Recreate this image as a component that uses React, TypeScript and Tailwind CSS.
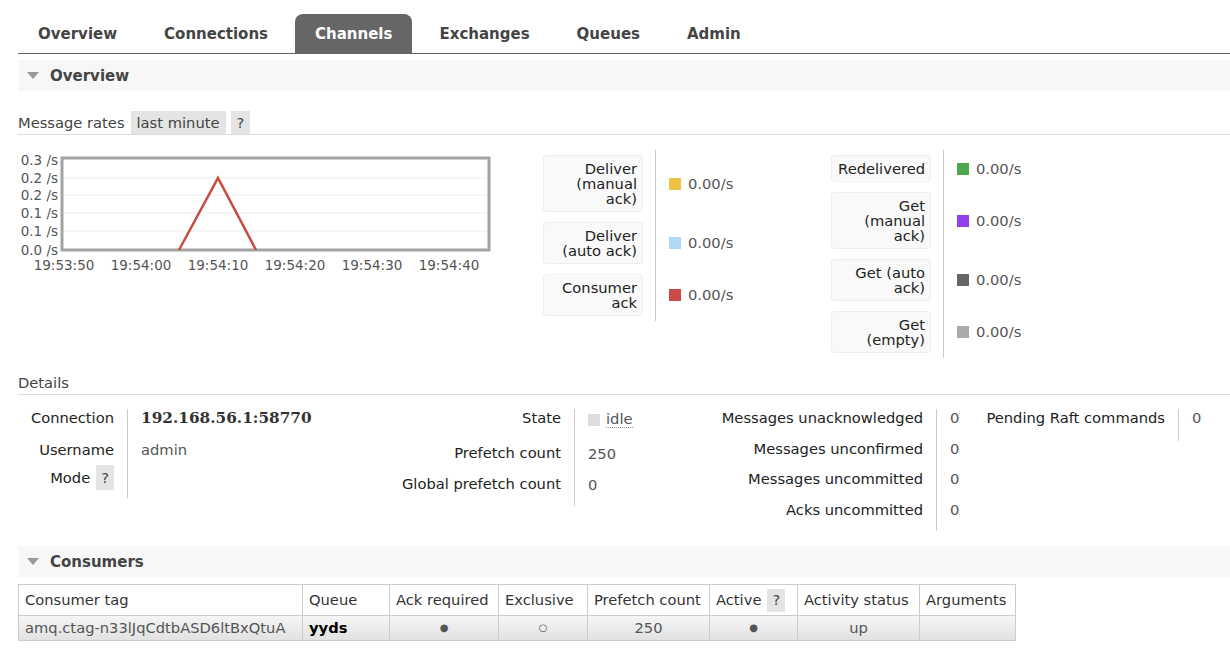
import React from "react"

const tabs = ["Overview", "Connections", "Channels", "Exchanges", "Queues", "Admin"]

function Tag({ children }: { children: React.ReactNode }) {
  return <span className="inline-flex h-[23px] items-center bg-[#e4e4e4] px-[6px] text-[#444]">{children}</span>
}

function SectionHeader({ title }: { title: string }) {
  return (
    <div className="flex h-[31px] items-center bg-[#f7f7f7] pl-[9px]">
      <svg width="12" height="7" viewBox="0 0 12 7">
        <polygon points="0,0 12,0 6,7" fill="#999" />
      </svg>
      <span className="ml-[11px] text-[15px] font-bold text-[#444]">{title}</span>
    </div>
  )
}

function Chart() {
  const ys = [
    ["0.3 /s", 10],
    ["0.2 /s", 28],
    ["0.2 /s", 45],
    ["0.1 /s", 63],
    ["0.1 /s", 81],
    ["0.0 /s", 100],
  ] as const
  const xs = ["19:53:50", "19:54:00", "19:54:10", "19:54:20", "19:54:30", "19:54:40"]
  return (
    <svg width="482" height="125" className="shrink-0" style={{ fontFamily: "'DejaVu Sans', Verdana, sans-serif" }}>
      {ys.slice(1, 5).map(([, y], i) => (
        <line key={i} x1="44" x2="470" y1={y} y2={y} stroke="#ececec" strokeWidth="1" />
      ))}
      {ys.map(([t, y], i) => (
        <text key={i} x="40" y={y + 5} textAnchor="end" fontSize="13.5" fill="#555">
          {t}
        </text>
      ))}
      {xs.map((t, i) => (
        <text key={t} x={46 + i * 77} y={120} textAnchor="middle" fontSize="13.5" fill="#555">
          {t}
        </text>
      ))}
      <rect x="44" y="8" width="427" height="92" fill="none" stroke="#a3a3a3" strokeWidth="3" />
      <polyline points="161,100 200,28 238,100" fill="none" stroke="#cb4b3c" strokeWidth="2.5" />
    </svg>
  )
}

type Rate = { label: string[]; color: string; h: string }

function RateColumn({ rows, valueW }: { rows: Rate[]; valueW: string }) {
  return (
    <div className="flex flex-col">
      {rows.map((r, i) => (
        <div key={i} className="flex">
          <div className="py-[5px] pr-[12px]">
            <div
              className={`${r.h} w-[100px] rounded-[3px] border border-[#eee] bg-[#f9f9f9] pr-[5px] pt-[5px] text-right leading-[15px] text-[#222]`}
            >
              {r.label.map((l, j) => (
                <div key={j}>{l}</div>
              ))}
            </div>
          </div>
          <div className={`${valueW} flex items-center border-l border-[#ccc] pl-[13px]`}>
            <span className={`mr-[7px] h-[12px] w-[12px] ${r.color}`} />
            <span className="text-[#555]">0.00/s</span>
          </div>
        </div>
      ))}
    </div>
  )
}

function DetailGroup({
  rows,
  labelW,
  valueW,
}: {
  rows: { label: React.ReactNode; value: React.ReactNode; h: string }[]
  labelW: string
  valueW: string
}) {
  return (
    <div className="flex">
      <div className={`${labelW} pr-[13px]`}>
        {rows.map((r, i) => (
          <div key={i} className={`${r.h} flex justify-end text-[#222]`}>
            {r.label}
          </div>
        ))}
      </div>
      <div className={`${valueW} border-l border-[#ccc] pl-[13px]`}>
        {rows.map((r, i) => (
          <div key={i} className={`${r.h} text-[#555]`}>
            {r.value}
          </div>
        ))}
      </div>
    </div>
  )
}

export default function App() {
  const col1: Rate[] = [
    { label: ["Deliver", "(manual", "ack)"], color: "bg-[#edc240]", h: "h-[57px]" },
    { label: ["Deliver", "(auto ack)"], color: "bg-[#afd8f8]", h: "h-[42px]" },
    { label: ["Consumer", "ack"], color: "bg-[#cb4b4b]", h: "h-[42px]" },
  ]
  const col2: Rate[] = [
    { label: ["Redelivered"], color: "bg-[#4da74d]", h: "h-[27px]" },
    { label: ["Get", "(manual", "ack)"], color: "bg-[#9440ed]", h: "h-[57px]" },
    { label: ["Get (auto", "ack)"], color: "bg-[#666]", h: "h-[42px]" },
    { label: ["Get", "(empty)"], color: "bg-[#aaa]", h: "h-[42px]" },
  ]

  return (
    <div className="min-h-[662px] bg-white pl-[18px] pt-[14px] font-['DejaVu_Sans',Verdana,sans-serif] text-[14.7px] leading-[18px]">
      <div className="flex gap-[7px] border-b border-[#666]">
        {tabs.map((t) => (
          <div
            key={t}
            className={`flex h-[39px] items-center rounded-t-[8px] px-[20px] text-[15px] font-bold ${
              t === "Channels" ? "bg-[#666] text-white" : "text-[#444]"
            }`}
          >
            {t}
          </div>
        ))}
      </div>

      <div className="mt-[6px]">
        <SectionHeader title="Overview" />
      </div>

      <div className="mt-[20px] flex h-[24px] items-start gap-[5px] border-b border-[#ddd]">
        <span className="mr-[1px] flex h-[23px] items-center text-[#444]">Message rates</span>
        <Tag>last minute</Tag>
        <Tag>?</Tag>
      </div>

      <div className="mt-[15px] flex items-start">
        <Chart />
        <div className="ml-[43px]">
          <RateColumn rows={col1} valueW="w-[176px]" />
        </div>
        <RateColumn rows={col2} valueW="w-[120px]" />
      </div>

      <div className="mt-[14px] flex h-[23px] items-center border-b border-[#ddd] text-[#444]">Details</div>

      <div className="mt-[14px] flex items-start">
        <DetailGroup
          labelW="w-[109px]"
          valueW="w-[193px]"
          rows={[
            {
              label: "Connection",
              value: (
                <span className="font-['DejaVu_Serif',serif] text-[15.3px] font-bold text-[#333]">192.168.56.1:58770</span>
              ),
              h: "h-[32px]",
            },
            { label: "Username", value: "admin", h: "h-[25px]" },
            {
              label: (
                <span className="flex items-center">
                  Mode
                  <span className="ml-[6px] flex h-[25px] items-center bg-[#e4e4e4] px-[5px] text-[#444]">?</span>
                </span>
              ),
              value: "",
              h: "h-[33px] items-start -mt-[1px]",
            },
          ]}
        />
        <DetailGroup
          labelW="w-[254px]"
          valueW="w-[126px]"
          rows={[
            {
              label: "State",
              value: (
                <span className="flex items-center pt-[2px]">
                  <span className="mr-[6px] h-[12px] w-[12px] bg-[#ddd]" />
                  <span className="border-b border-dotted border-[#999] leading-[16px]">idle</span>
                </span>
              ),
              h: "h-[35px]",
            },
            { label: "Prefetch count", value: <span className="block pt-[1px]">250</span>, h: "h-[31px]" },
            { label: "Global prefetch count", value: <span className="block pt-[1px]">0</span>, h: "h-[31px]" },
          ]}
        />
        <DetailGroup
          labelW="w-[236px]"
          valueW="w-[48px]"
          rows={[
            { label: "Messages unacknowledged", value: "0", h: "h-[31px]" },
            { label: "Messages unconfirmed", value: "0", h: "h-[30px]" },
            { label: "Messages uncommitted", value: "0", h: "h-[31px]" },
            { label: "Acks uncommitted", value: "0", h: "h-[30px]" },
          ]}
        />
        <DetailGroup
          labelW="w-[194px]"
          valueW="w-[40px]"
          rows={[{ label: "Pending Raft commands", value: "0", h: "h-[32px]" }]}
        />
      </div>

      <div className="mt-[15px]">
        <SectionHeader title="Consumers" />
      </div>

      <table className="mt-[7px] table-fixed border-collapse text-[#333]">
        <thead>
          <tr className="h-[31px]">
            <th className="w-[284px] border border-[#ccc] px-[6px] text-left font-normal">Consumer tag</th>
            <th className="w-[87px] border border-[#ccc] px-[6px] text-left font-normal">Queue</th>
            <th className="w-[109px] border border-[#ccc] px-[6px] text-left font-normal">Ack required</th>
            <th className="w-[89px] border border-[#ccc] px-[6px] text-left font-normal">Exclusive</th>
            <th className="w-[122px] border border-[#ccc] px-[6px] text-left font-normal">Prefetch count</th>
            <th className="w-[88px] border border-[#ccc] px-[6px] text-left font-normal">
              <span className="flex items-center gap-[6px]">
                Active
                <span className="flex h-[23px] items-center bg-[#e4e4e4] px-[5px] text-[#444]">?</span>
              </span>
            </th>
            <th className="w-[122px] border border-[#ccc] px-[6px] text-left font-normal">Activity status</th>
            <th className="w-[96px] border border-[#ccc] px-[6px] text-left font-normal">Arguments</th>
          </tr>
        </thead>
        <tbody>
          <tr className="h-[25px] bg-gradient-to-b from-[#f5f5f5] to-[#e1e1e1] text-[#555]">
            <td className="border border-[#ccc] px-[6px]">amq.ctag-n33lJqCdtbASD6ltBxQtuA</td>
            <td className="border border-[#ccc] px-[6px] font-bold text-black">yyds</td>
            <td className="border border-[#ccc] px-[6px] text-center text-[10px]">●</td>
            <td className="border border-[#ccc] px-[6px] text-center text-[10px]">○</td>
            <td className="border border-[#ccc] px-[6px] text-center">250</td>
            <td className="border border-[#ccc] px-[6px] text-center text-[10px]">●</td>
            <td className="border border-[#ccc] px-[6px] text-center">up</td>
            <td className="border border-[#ccc] px-[6px]"></td>
          </tr>
        </tbody>
      </table>
    </div>
  )
}
